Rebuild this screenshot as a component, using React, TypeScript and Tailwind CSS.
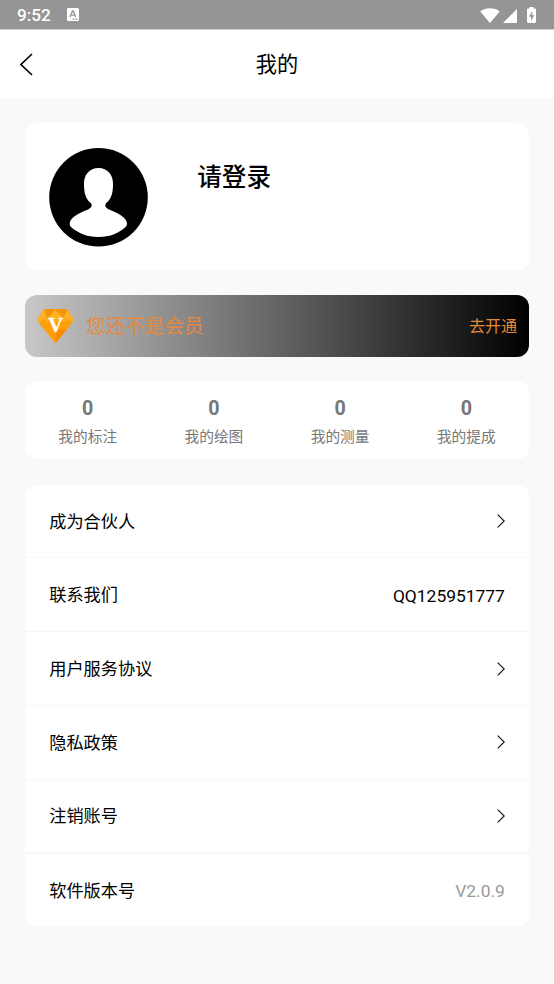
import React, { FC } from "react";

interface StatItem {
  label: string;
  count: number;
}

interface MenuItem {
  label: string;
  value?: string;
  valueClass?: string;
}

const stats: StatItem[] = [
  { label: "我的标注", count: 0 },
  { label: "我的绘图", count: 0 },
  { label: "我的测量", count: 0 },
  { label: "我的提成", count: 0 },
];

const menu: MenuItem[] = [
  { label: "成为合伙人" },
  { label: "联系我们", value: "QQ125951777", valueClass: "text-black" },
  { label: "用户服务协议" },
  { label: "隐私政策" },
  { label: "注销账号" },
  { label: "软件版本号", value: "V2.0.9", valueClass: "text-[#999999]" },
];

const StatusBar: FC = () => (
  <div className="flex h-[29px] items-center justify-between bg-[#959595] pl-[17px] pr-[18px] text-white">
    <div className="flex items-center">
      <span className="pt-[3px] text-[17.2px] font-medium leading-none">9:52</span>
      <svg className="ml-[16.5px] h-[13px] w-3" viewBox="0 0 12 13">
        <rect width="12" height="13" rx="1.2" fill="#fff" />
        <path
          d="M3 9 5.5 3h.8L8.8 9M4 7.2h3.8M5.5 11.2h2M8.5 11.2h2"
          fill="none"
          stroke="#959595"
          strokeWidth="1.3"
        />
      </svg>
    </div>
    <div className="flex items-end">
      <svg className="h-[15px] w-5" viewBox="0 0 20 15">
        <path d="M10 15 .3 3.6C3 1.4 6.3 .3 10 .3s7 1.1 9.7 3.3z" fill="#fff" />
      </svg>
      <svg className="ml-[3px] h-[14px] w-[14px]" viewBox="0 0 14 14">
        <path d="M14 0v14H0z" fill="#fff" />
      </svg>
      <svg className="ml-[10px] h-4 w-[9px]" viewBox="0 0 9 16">
        <path
          d="M2.5 0h4v1.6h1.3c.7 0 1.2.5 1.2 1.2v12c0 .7-.5 1.2-1.2 1.2H1.2C.5 16 0 15.5 0 14.8v-12c0-.7.5-1.2 1.2-1.2h1.3z"
          fill="#fff"
        />
        <path d="M5.3 4 2 9.7h2V14l3.2-5.8h-2z" fill="#959595" />
      </svg>
    </div>
  </div>
);

const Avatar: FC = () => (
  <svg className="h-[99px] w-[99px]" viewBox="0 0 99 99">
    <circle cx="49.5" cy="49.3" r="49.3" fill="#000" />
    <path
      d="M49.5 20c-9 0-15 7-14.5 16.5 0 9 2 15 7 18.8 1.5 2.7.5 4.7-3.5 6.5C30 65 20.7 70 20.7 75.5c0 1.5.3 2.5 1.3 3.5C29 85 37.5 89 49.5 89s20.500-4 27-10c1-1 1.500-2 1.500-3.500C78 70 69 65 60.500 61.800 56.500 60 55.500 58 57 55.300c5-3.800 7-9.800 7-18.800C64.500 27 58.500 20 49.500 20z"
      fill="#fff"
    />
  </svg>
);

const VipGem: FC = () => (
  <svg className="h-[34px] w-[37px]" viewBox="0 0 37 34">
    <path
      d="M8.5 0h20q1.5 0 2.3 1.2l5.7 8.6q.8 1.3-.2 2.4L19.7 33q-1.2 1.2-2.4 0L.7 12.2q-1-1.1-.2-2.4l5.7-8.6Q7 0 8.5 0z"
      fill="#ff9f06"
    />
    <path d="M7 .5 10.5 9.5.5 13l-.2-3z" fill="#fdb02c" />
    <path d="M30 .5 26.5 9.5 36.5 13l.2-3z" fill="#fdb02c" />
    <path d="M8.5 0h10l-8 9.5L7 .5z" fill="#f59409" />
    <path d="M28.5 0h-10l8 9.5L30 .5z" fill="#f59409" />
    <path d="M18.5 1 10.5 9.5l-3 3h22l-3-3z" fill="#feb31f" />
    <path d="M18.5 21v12.8q.7 0 1.2-.8L30 20z" fill="#fb8b05" />
    <text
      x="18.5"
      y="23"
      textAnchor="middle"
      fill="#fff"
      stroke="#fff"
      strokeWidth="0.3"
      fontFamily="Liberation Serif, serif"
      fontWeight="bold"
      fontSize="21"
    >
      V
    </text>
  </svg>
);

const ChevronRight: FC = () => (
  <svg className="h-[14px] w-2" viewBox="0 0 8 14">
    <path d="M.7.7 7.2 7 .7 13.3" fill="none" stroke="#111" strokeWidth="1.15" />
  </svg>
);

const App: FC = () => {
  return (
    <div className="min-h-[984px] w-full bg-[#f9f9f9] font-[Roboto,'Noto_Sans_CJK_SC',sans-serif] text-black">
      <StatusBar />

      <header className="grid h-[69px] grid-cols-3 items-center border-t border-[#d0d0d0] bg-white px-[19.5px]">
        <svg className="h-[23px] w-[13px]" viewBox="0 0 13 23">
          <path d="M12 1 1 11.5 12 22" fill="none" stroke="#000" strokeWidth="1.6" />
        </svg>
        <h1 className="pt-[2px] text-center text-[21.2px] leading-none">我的</h1>
      </header>

      <main className="px-[24.6px] pt-[25px]">
        {/* Profile */}
        <section className="flex h-[147.5px] rounded-xl bg-white pl-[24.6px] pt-[24.6px]">
          <Avatar />
          <div className="ml-[49px] pt-[12px] text-[24.6px] font-medium leading-[36px]">请登录</div>
        </section>

        {/* Membership */}
        <section className="mt-[24.6px] flex h-[61.5px] items-center rounded-xl bg-linear-to-r/srgb from-[#c8c8c8] to-black px-3 text-[#e6893a]">
          <VipGem />
          <span className="ml-[12.5px] pt-[2px] text-[19.6px]">您还不是会员</span>
          <button className="ml-auto pr-[0.5px] pt-[3px] text-[16px]">去开通</button>
        </section>

        {/* Stats */}
        <section className="mt-[24.6px] grid h-[78px] grid-cols-4 rounded-xl bg-white text-center text-[#777777]">
          {stats.map((item) => (
            <div key={item.label} className="pt-[16px]">
              <div className="text-[19.7px] font-bold leading-6">{item.count}</div>
              <div className="mt-[4.5px] text-[14.7px] leading-[22px]">{item.label}</div>
            </div>
          ))}
        </section>

        {/* Menu */}
        <section className="mt-[25.4px] rounded-xl bg-white">
          {menu.map((item) => (
            <div
              key={item.label}
              className="flex h-[73.8px] items-center justify-between border-b border-[#f7f7f7] px-[24.6px] text-[17.2px] last:border-b-0 nth-5:border-b-2"
            >
              <span className="pt-[3px]">{item.label}</span>
              {item.value ? (
                <span className={`pt-[2px] text-[17.4px] ${item.valueClass}`}>{item.value}</span>
              ) : (
                <ChevronRight />
              )}
            </div>
          ))}
        </section>
      </main>
    </div>
  );
};

export default App;
